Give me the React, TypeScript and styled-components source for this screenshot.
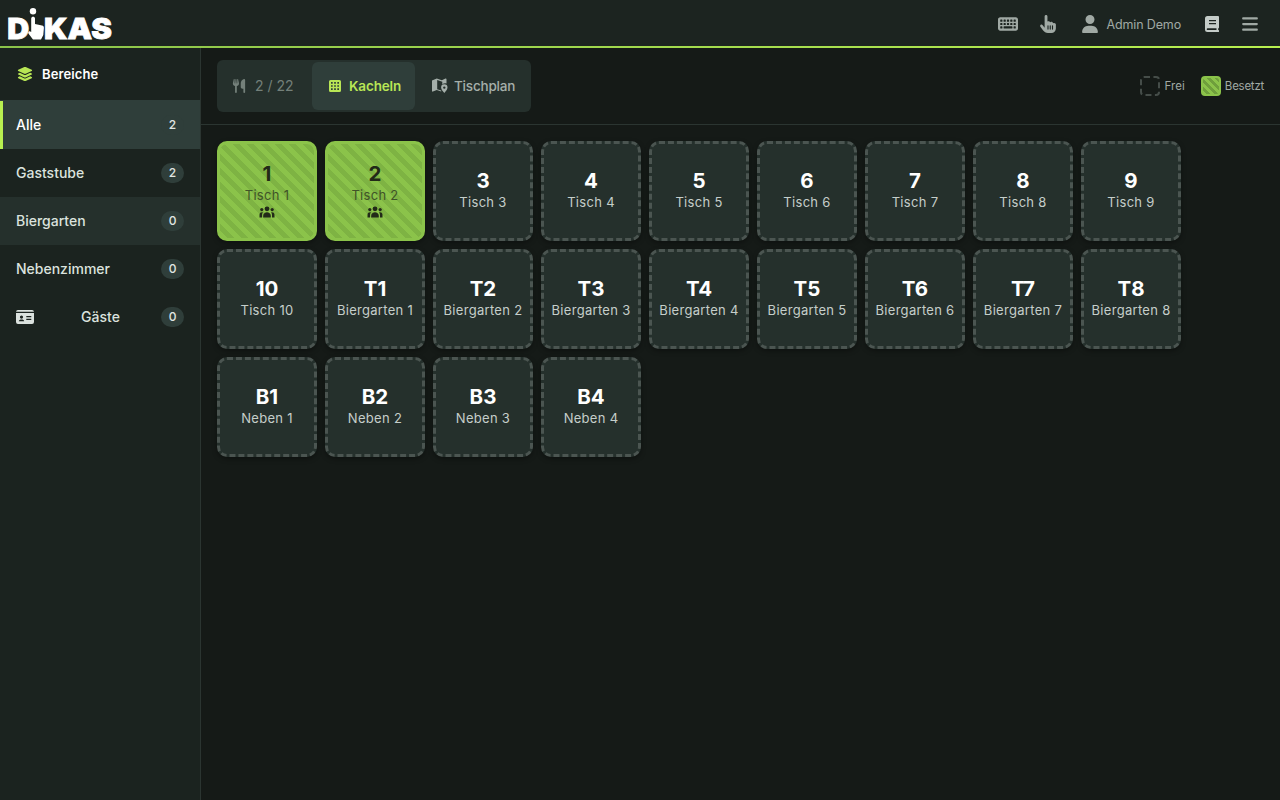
import React from 'react';
import styled, { createGlobalStyle, css } from 'styled-components';
import { FaLayerGroup, FaKeyboard, FaHandPointer, FaUser, FaBars, FaUtensils } from 'react-icons/fa6';

const GlobalStyle = createGlobalStyle`
  * { box-sizing: border-box; }
  body { margin: 0; background: #151a17; color: #dbe2de; font-family: Inter, "Liberation Sans", sans-serif; overflow: hidden; }
`;
const Page = styled.div`height: 100vh; display: flex; flex-direction: column;`;
const Header = styled.header`
  height: 48px; flex: none; display: flex; align-items: center; justify-content: space-between;
  padding: 0 21px 0 6px; background: #1c2420; border-bottom: 2px solid;
  border-image: linear-gradient(90deg, #8bc34a, #b8f050) 1;
`;
const Actions = styled.div`display: flex; align-items: center; color: #a0a9a4; padding-top: 2px;`;
const Action = styled.div<{ $gap: number; $bright?: boolean }>`
  display: flex; align-items: center; margin-left: ${p => p.$gap}px; color: ${p => (p.$bright ? '#c4ccc8' : 'inherit')};
`;
const Label = styled.span<{ $size: number; $spacing?: number; $weight?: number }>`
  font-size: ${p => p.$size}px; letter-spacing: ${p => p.$spacing ?? 0}px; font-weight: ${p => p.$weight ?? 400}; white-space: nowrap;
`;
const Body = styled.div`flex: 1; display: flex; min-height: 0;`;
const Sidebar = styled.aside`width: 201px; flex: none; background: #1b231f; border-right: 1px solid #2b3531;`;
const SideTitle = styled.div`
  height: 53px; display: flex; align-items: center; gap: 9px; padding: 0 16px 1px 17px; color: #fff; border-bottom: 1px solid #2f3e3a;
  svg { color: #b8e655; }
`;
const Area = styled.div<{ $state?: 'active' | 'hover' }>`
  height: 48px; display: flex; align-items: center; justify-content: space-between; padding: 0 16px 1px;
  ${p => p.$state === 'active' && css`background: #2f3e3a; color: #fff; border-left: 3px solid #b8f050; padding-left: 13px;`}
  ${p => p.$state === 'hover' && css`background: #25302c;`}
`;
const Count = styled.span`
  width: 23px; height: 20px; border-radius: 10px; background: #2f3e3a; display: grid; place-items: center;
  font-size: 12px; font-weight: 500; color: #e0e6e2;
`;
const CardSlot = styled.span`width: 24px; height: 14px; display: flex;`;
const Main = styled.main`flex: 1; min-width: 0;`;
const Toolbar = styled.div`
  height: 77px; display: flex; align-items: center; justify-content: space-between; padding: 0 16px; border-bottom: 1px solid #2b3531;
`;
const Segments = styled.div`display: flex; height: 52px; width: 314px; padding: 2px; border-radius: 6px; background: #25302c;`;
const Segment = styled.div<{ $width: number; $color: string; $active?: boolean; $gap: number; $left: number }>`
  width: ${p => p.$width}px; flex: none; display: flex; align-items: center; gap: ${p => p.$gap}px;
  padding: 0 0 1px ${p => p.$left}px;
  color: ${p => p.$color}; border-radius: 6px; background: ${p => (p.$active ? '#2f3e3a' : 'transparent')};
`;
const Legend = styled.div`display: flex; gap: 16px; color: #a0a9a4;`;
const LegendItem = styled.div`display: flex; align-items: center; gap: 4px;`;
const Swatch = styled.span<{ $busy?: boolean }>`
  width: 20px; height: 20px; border-radius: 4px; border: 2px dashed #454d49;
  ${p => p.$busy && css`border: 2px solid #8bc34a; background: repeating-linear-gradient(45deg, #8bc34a 0 2.8px, #6f9f3c 2.8px 5.6px) padding-box, #8bc34a;`}
`;
const Tiles = styled.div`display: grid; grid-template-columns: repeat(9, 100px); grid-auto-rows: 100px; gap: 8px; padding: 16px;`;
const Tile = styled.div<{ $busy?: boolean }>`
  border: 3px dashed #4b5551; border-radius: 10px; background: #25302c; color: #c5ceca; padding-bottom: 1px;
  display: flex; flex-direction: column; align-items: center; justify-content: center; box-shadow: 0 2px 5px rgba(0,0,0,.35);
  ${p => p.$busy && css`
    border: 3px solid #8bc34a; color: #405328; padding-bottom: 0;
    background: repeating-linear-gradient(45deg, #8bc34a 0 5px, #7eb343 5px 10px) padding-box, #8bc34a;
  `}
  svg { color: #222a18; margin: 1px 0 3px; }
`;
const Num = styled.div<{ $busy?: boolean }>`font-size: 20.5px; line-height: 24px; font-weight: 700; color: ${p => (p.$busy ? '#222a18' : '#fff')};`;
const Name = styled.div`font-size: 13px; line-height: 19px; letter-spacing: .3px; white-space: nowrap;`;
const LogoSvg = styled.svg`display: block; overflow: visible; font-family: Inter, sans-serif; font-weight: 900; font-size: 29px;`;

const Logo = () => (
  <LogoSvg width="108" height="36" viewBox="0 0 108 36" fill="#fff">
    <g stroke="#fff" strokeWidth=".8">
      <text x="1.200" y="34" textLength="22" lengthAdjust="spacingAndGlyphs">D</text>
      <text x="38" y="34" textLength="68" lengthAdjust="spacingAndGlyphs">KAS</text>
    </g>
    <circle cx="27" cy="6.300" r="3.200" />
    <path d="M25.200 13.500c0-2.200 3.800-2.200 3.800 0V19l7 1.500c1.300.3 2 1.100 1.900 2.400l-.6 7.100-2.300 4.500h-8L22.600 28.800c-1-1.800.4-3.200 1.700-2.400l.9.600z" />
  </LogoSvg>
);
const BookIcon = () => (
  <svg width="14" height="16" viewBox="0 0 14 16" fill="currentColor" fillRule="evenodd">
    <path d="M2.500 0H13a1 1 0 0 1 1 1v10.500a1 1 0 0 1-.8 1V14a1 1 0 0 1 0 2H2.500A2.500 2.500 0 0 1 0 13.500v-11A2.500 2.500 0 0 1 2.500 0zM4 4v1.300h7V4zM4 7v1.300h7V7zM2.600 12.300a.85.850 0 0 0 0 1.700h8.900v-1.700z" />
  </svg>
);
const GridIcon = () => (
  <svg width="12" height="12" viewBox="0 0 12 12" fill="currentColor" fillRule="evenodd">
    <path d="M1.500 0h9A1.500 1.500 0 0 1 12 1.500v9a1.500 1.500 0 0 1-1.500 1.500h-9A1.500 1.500 0 0 1 0 10.500v-9A1.500 1.500 0 0 1 1.500 0zM2 2v1.700h1.700V2zM5.150 2v1.700h1.700V2zM8.300 2v1.700H10V2zM2 5.150v1.700h1.700v-1.700zM5.150 5.150v1.700h1.700v-1.700zM8.300 5.150v1.700H10v-1.700zM2 8.300V10h1.700V8.300zM5.150 8.300V10h1.700V8.300zM8.300 8.300V10H10V8.300z" />
  </svg>
);
const MapIcon = () => (
  <svg width="16" height="15" viewBox="0 0 16 15" fill="currentColor" fillRule="evenodd">
    <path d="M0 2.500 4.800.500l5 1.700L13.500.600c.6-.2 1 .1 1 .6v4.200a4.300 4.300 0 0 0-4.200 1V3.800L5.200 2.100v9.100l4 1.400v1L4.800 12 .9 13.600c-.5.200-.9-.1-.9-.6z" />
    <path d="M12.300 6.300a3.200 3.200 0 0 1 3.200 3.200c0 2-2 4-3.200 5.400-1.200-1.400-3.200-3.400-3.200-5.400a3.200 3.200 0 0 1 3.200-3.200zm0 2.100a1.200 1.200 0 1 0 0 2.400 1.200 1.200 0 0 0 0-2.400z" />
  </svg>
);
const GroupIcon = () => (
  <svg width="16" height="12" viewBox="0 0 16 12" fill="currentColor">
    <circle cx="8" cy="2.800" r="2.400" /><circle cx="2.800" cy="3.600" r="1.600" /><circle cx="13.200" cy="3.600" r="1.600" />
    <path d="M4.200 11.500V9.700c0-4.700 7.600-4.700 7.600 0v1.800zM.5 11.500V8.800C.5 6.500 2.300 5.900 4 6.300 3.200 7.300 3 8.300 3 9.500v2zM15.500 11.500V8.800c0-2.300-1.800-2.900-3.500-2.500.8 1 1 2 1 3.200v2z" />
  </svg>
);
const CardIcon = () => (
  <svg width="18" height="14" viewBox="0 0 18 14" fill="currentColor" fillRule="evenodd">
    <path d="M2 0h14a2 2 0 0 1 2 1.800H0A2 2 0 0 1 2 0zM0 3h18v9a2 2 0 0 1-2 2H2a2 2 0 0 1-2-2zm5.500 2.500a1.600 1.600 0 1 0 0 3.200 1.600 1.600 0 0 0 0-3.200zM2.800 11.300h5.400c0-2.400-5.400-2.400-5.400 0zM10.300 6v1.200h5V6zM10.300 8.800V10h5V8.800z" />
  </svg>
);

const tables: [string, string][] = [
  ...Array.from({ length: 10 }, (_, i): [string, string] => [`${i + 1}`, `Tisch ${i + 1}`]),
  ...Array.from({ length: 8 }, (_, i): [string, string] => [`T${i + 1}`, `Biergarten ${i + 1}`]),
  ...Array.from({ length: 4 }, (_, i): [string, string] => [`B${i + 1}`, `Neben ${i + 1}`]),
];
const areas: { name: string; count: number; state?: 'active' | 'hover' }[] = [
  { name: 'Alle', count: 2, state: 'active' },
  { name: 'Gaststube', count: 2 },
  { name: 'Biergarten', count: 0, state: 'hover' },
  { name: 'Nebenzimmer', count: 0 },
];

export default function App() {
  return (
    <Page>
      <GlobalStyle />
      <Header>
        <Logo />
        <Actions>
          <Action $gap={0}><FaKeyboard size={20} /></Action>
          <Action $gap={21}><FaHandPointer size={18} /></Action>
          <Action $gap={24}><FaUser size={18} /></Action>
          <Action $gap={8}><Label $size={12.5} $spacing={-0.15}>Admin Demo</Label></Action>
          <Action $gap={24} $bright><BookIcon /></Action>
          <Action $gap={22}><FaBars size={18} /></Action>
        </Actions>
      </Header>
      <Body>
        <Sidebar>
          <SideTitle><FaLayerGroup size={16} /><Label $size={13} $weight={600} $spacing={0.1}>Bereiche</Label></SideTitle>
          {areas.map(a => (
            <Area key={a.name} $state={a.state}>
              <Label $size={14} $weight={500}>{a.name}</Label><Count>{a.count}</Count>
            </Area>
          ))}
          <Area><CardSlot><CardIcon /></CardSlot><Label $size={14} $weight={500}>Gäste</Label><Count>0</Count></Area>
        </Sidebar>
        <Main>
          <Toolbar>
            <Segments>
              <Segment $width={93} $left={13} $color="#74807a" $gap={9}><FaUtensils size={14} /><Label $size={14}>2 / 22</Label></Segment>
              <Segment $width={103} $left={17} $color="#b8e655" $active $gap={8}><GridIcon /><Label $size={13.5} $spacing={-0.15} $weight={600}>Kacheln</Label></Segment>
              <Segment $width={114} $left={17} $color="#a5afaa" $gap={6}><MapIcon /><Label $size={13.5} $spacing={-0.2} $weight={500}>Tischplan</Label></Segment>
            </Segments>
            <Legend>
              <LegendItem><Swatch /><Label $size={11.5} $spacing={0.1}>Frei</Label></LegendItem>
              <LegendItem><Swatch $busy /><Label $size={11.5} $spacing={-0.25}>Besetzt</Label></LegendItem>
            </Legend>
          </Toolbar>
          <Tiles>
            {tables.map(([num, name], i) => (
              <Tile key={num} $busy={i < 2}>
                <Num $busy={i < 2}>{num}</Num><Name>{name}</Name>
                {i < 2 && <GroupIcon />}
              </Tile>
            ))}
          </Tiles>
        </Main>
      </Body>
    </Page>
  );
}
